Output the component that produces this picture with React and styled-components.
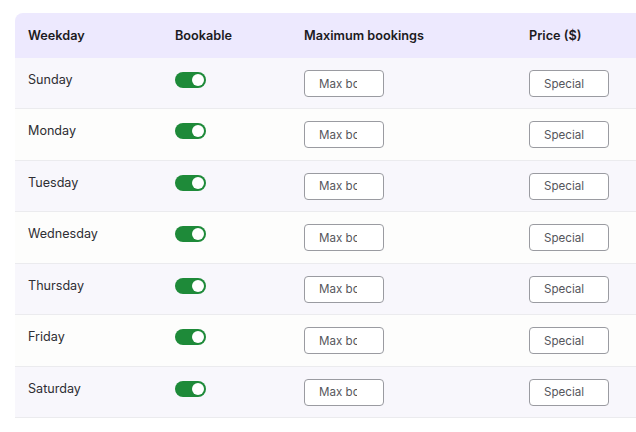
import React, { useState } from 'react'
import styled, { createGlobalStyle } from 'styled-components'

const GlobalStyle = createGlobalStyle`
	html, body {
		margin: 0;
		padding: 0;
		background: #ffffff;
		overflow: hidden;
	}
	body {
		font-family: Inter, 'Noto Sans', sans-serif;
		-webkit-font-smoothing: antialiased;
	}
`

const days = ['Sunday', 'Monday', 'Tuesday', 'Wednesday', 'Thursday', 'Friday', 'Saturday']

function Toggle({ checked, onChange }) {
	return (
		<ToggleTrack type='button' $on={checked} onClick={() => onChange(!checked)}>
			<ToggleKnob $on={checked} />
		</ToggleTrack>
	)
}

export default function App() {
	const [bookable, setBookable] = useState(days.map(() => true))

	const flip = (i) => (v) => setBookable((prev) => prev.map((b, j) => (j === i ? v : b)))

	return (
		<Page>
			<GlobalStyle />
			<Table>
				<HeaderRow>
					<HeadCell>Weekday</HeadCell>
					<HeadCell>Bookable</HeadCell>
					<HeadCell>Maximum bookings</HeadCell>
					<HeadCell>Price ($)</HeadCell>
				</HeaderRow>
				{days.map((day, i) => (
					<Row key={day} $odd={i % 2 === 0}>
						<DayCell>{day}</DayCell>
						<Cell $top={14}>
							<Toggle checked={bookable[i]} onChange={flip(i)} />
						</Cell>
						<Cell $top={12}>
							<SmallInput type='text' placeholder='Max bookings' $padRight={26} />
						</Cell>
						<Cell $top={12}>
							<SmallInput type='text' placeholder='Special price' $padRight={24} />
						</Cell>
					</Row>
				))}
			</Table>
		</Page>
	)
}

const Page = styled.div`
	padding: 13px 0 0 15px;
	width: 740px;
`

const Table = styled.div`
	display: flex;
	flex-direction: column;
	width: 100%;
`

const columns = `147px 129px 225px 1fr`

const HeaderRow = styled.div`
	display: grid;
	grid-template-columns: ${columns};
	height: 45px;
	align-items: center;
	background: #ede9fe;
	border-top-left-radius: 8px;
`

const HeadCell = styled.div`
	padding: 0 13px;
	font-size: 12.7px;
	font-weight: 600;
	color: #1c1b22;
`

const Row = styled.div`
	display: grid;
	grid-template-columns: ${columns};
	height: 51.43px;
	box-sizing: border-box;
	align-items: start;
	background: ${(p) => (p.$odd ? '#f8f7fc' : '#fdfdfc')};
	border-bottom: 1px solid #ebebee;
`

const Cell = styled.div`
	padding: ${(p) => p.$top}px 13px 0;
	display: flex;
`

const DayCell = styled.div`
	padding: 13px 13px 0;
	font-size: 12.6px;
	line-height: 18px;
	color: #2e2e33;
`

const ToggleTrack = styled.button`
	position: relative;
	width: 31px;
	height: 16px;
	padding: 0;
	border: none;
	border-radius: 8px;
	background: ${(p) => (p.$on ? '#1e8a39' : '#c4c4c9')};
	cursor: pointer;
`

const ToggleKnob = styled.span`
	position: absolute;
	top: 2px;
	left: ${(p) => (p.$on ? '17px' : '2px')};
	width: 12px;
	height: 12px;
	border-radius: 50%;
	background: #ffffff;
`

const SmallInput = styled.input`
	width: 80px;
	height: 27px;
	box-sizing: border-box;
	padding: 0 ${(p) => p.$padRight}px 0 14px;
	border: 1px solid #9a9ba1;
	border-radius: 4px;
	background: #ffffff;
	font-family: Inter, 'Noto Sans', sans-serif;
	font-size: 11.6px;
	color: #333;
	outline: none;

	&::placeholder {
		color: #55565c;
	}
`
